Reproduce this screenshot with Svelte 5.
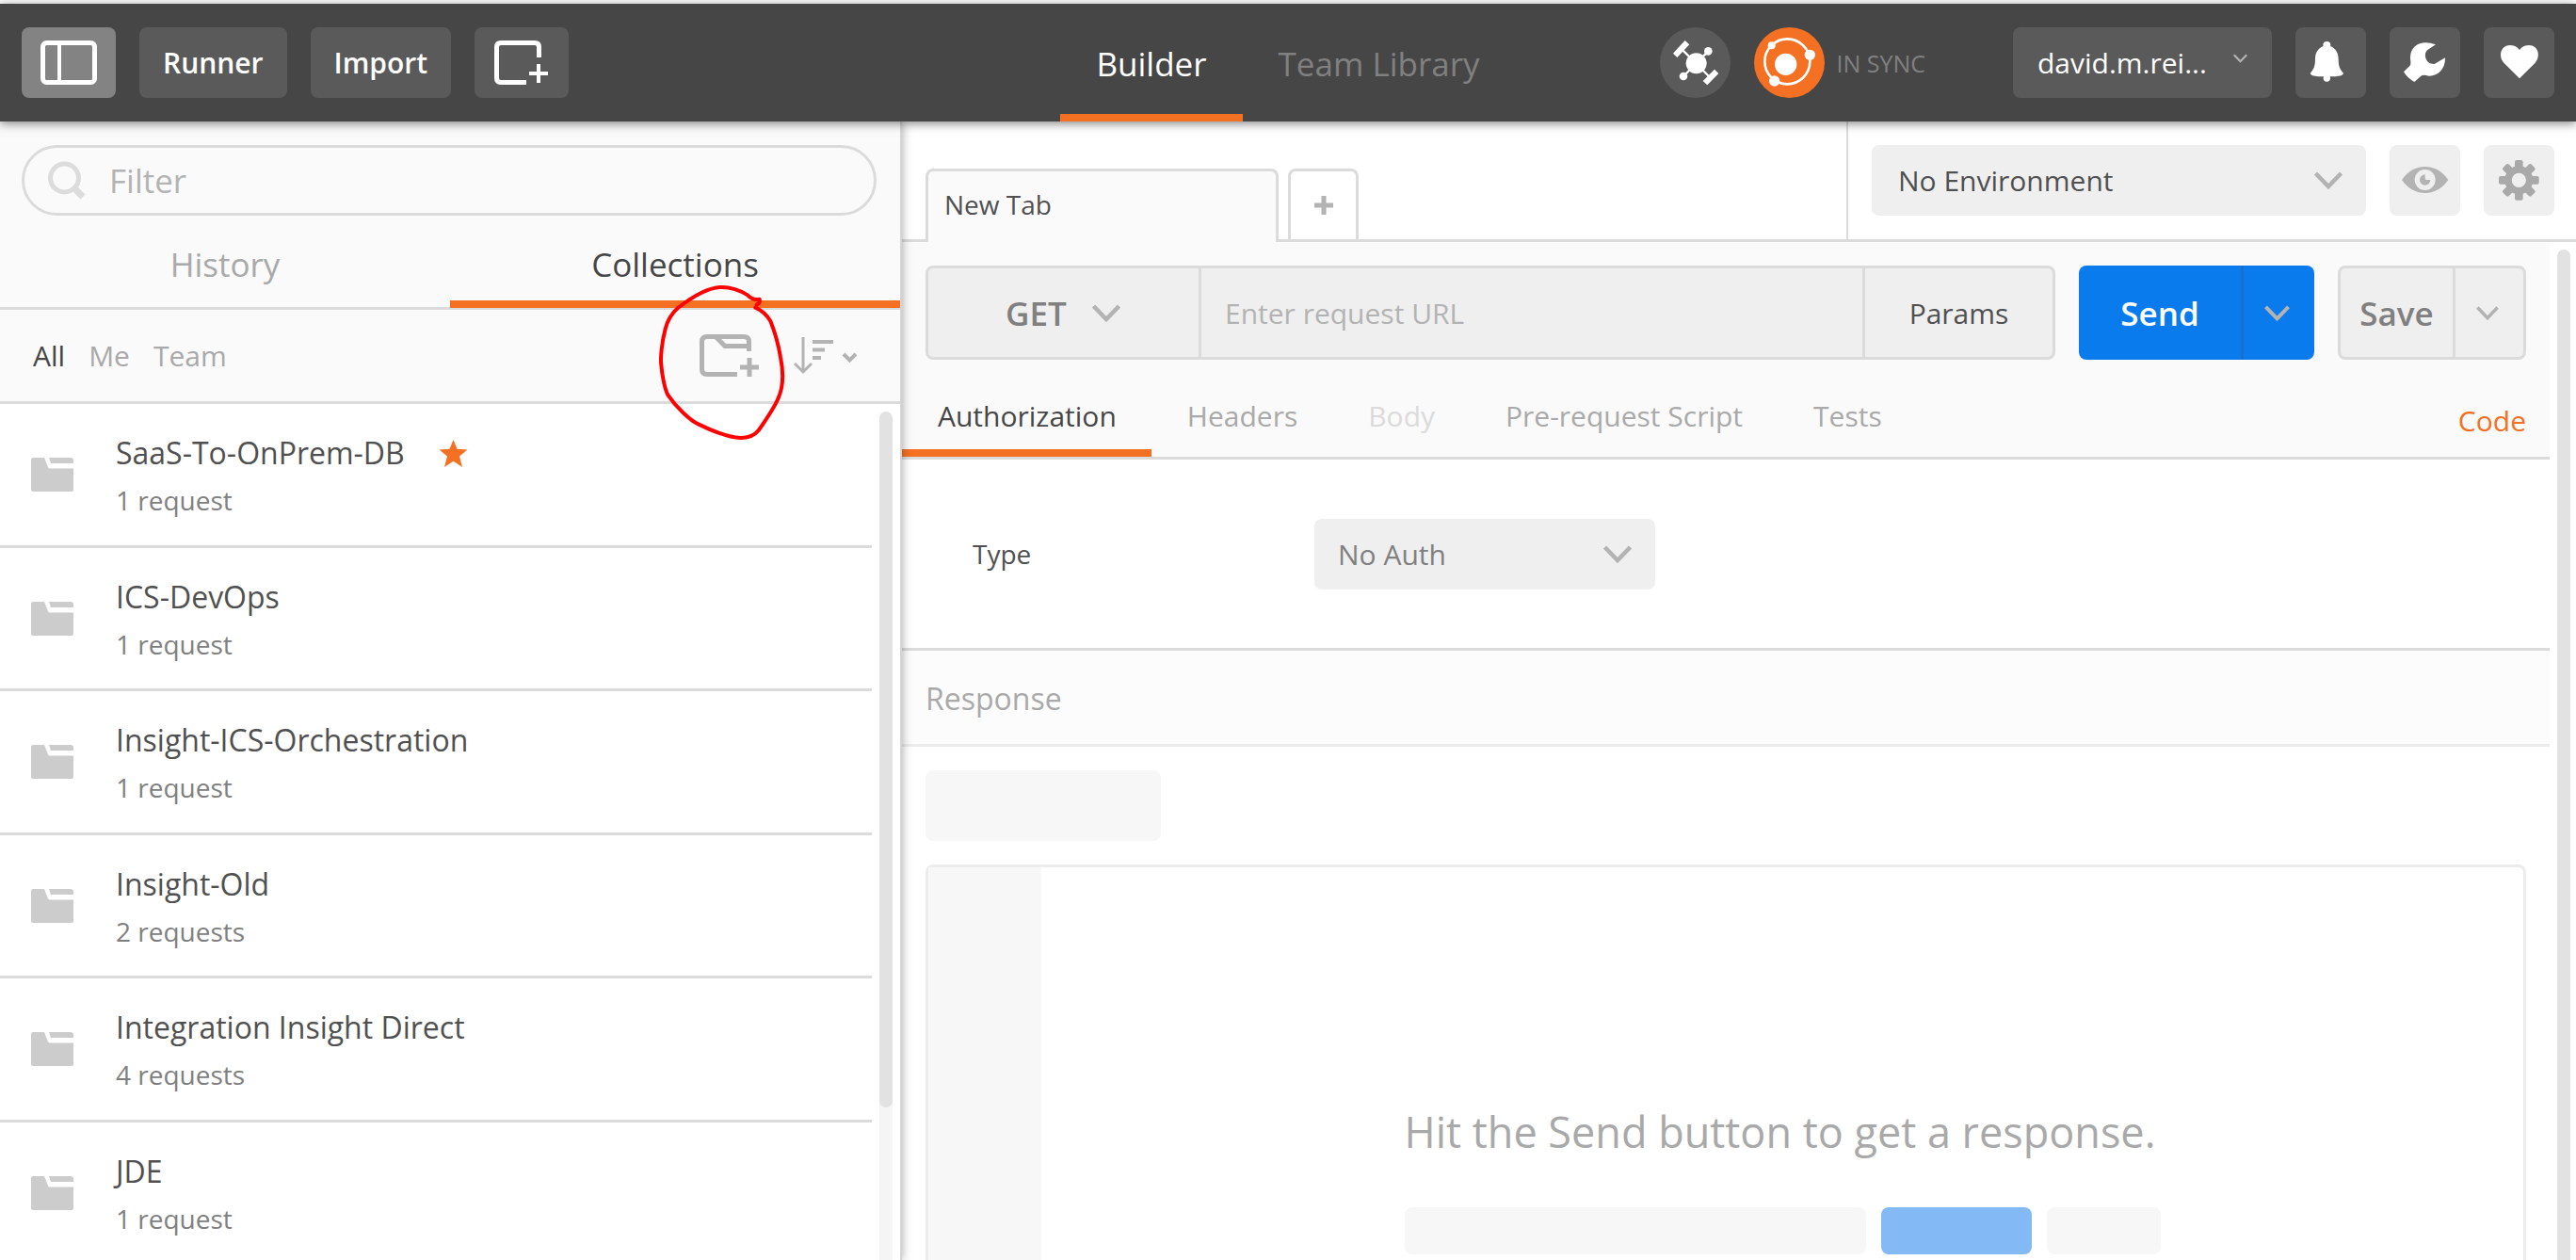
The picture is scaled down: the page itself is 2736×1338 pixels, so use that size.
<script>
  const collections = [
    { name: 'SaaS-To-OnPrem-DB', count: '1 request', starred: true },
    { name: 'ICS-DevOps', count: '1 request' },
    { name: 'Insight-ICS-Orchestration', count: '1 request' },
    { name: 'Insight-Old', count: '2 requests' },
    { name: 'Integration Insight Direct', count: '4 requests' },
    { name: 'JDE', count: '1 request' }
  ];
  const scopes = ['All', 'Me', 'Team'];
  const requestTabs = ['Authorization', 'Headers', 'Body', 'Pre-request Script', 'Tests'];
  const gearTeeth = [0, 45, 90, 135, 180, 225, 270, 315];

  let scope = $state('All');
  let requestTab = $state('Authorization');
  let url = $state('');
  let filter = $state('');
</script>

{#snippet chevron(size)}
  <svg class="chevron {size}" viewBox="0 0 30 19" aria-hidden="true">
    <path d="M1.5 2 L15 16 L28.5 2" fill="none" stroke="currentColor" stroke-width="4.5" />
  </svg>
{/snippet}

<div class="app">
  <header class="header">
    <div class="header-left">
      <button class="dark-btn wide active" aria-label="Toggle sidebar">
        <svg width="60" height="47" viewBox="0 0 60 47" fill="none" stroke="#fff">
          <rect x="2.5" y="2.5" width="55" height="42" rx="4" stroke-width="5" />
          <path d="M20 3V44" stroke-width="4" />
        </svg>
      </button>
      <button class="dark-btn text">Runner</button>
      <button class="dark-btn text">Import</button>
      <button class="dark-btn wide" aria-label="New window">
        <svg width="58" height="47" viewBox="0 0 58 47" fill="none" stroke="#fff">
          <path d="M34 44.5H7Q2.500 44.500 2.500 40V7Q2.500 2.500 7 2.500H43Q47.500 2.500 47.500 7V18" stroke-width="5" />
          <path d="M37 35H57M47 25V45" stroke-width="4" />
        </svg>
      </button>
    </div>

    <nav class="header-nav">
      <a class="current" href="#builder">Builder</a>
      <a href="#library">Team Library</a>
    </nav>

    <div class="header-right">
      <button class="round" aria-label="Interceptor">
        <svg viewBox="0 0 225 225" fill="#fff" stroke="#fff">
          <path d="M70 70L162 162M154 76L75 156" stroke-width="7" />
          <circle cx="116" cy="115" r="33" stroke="none" />
          <circle cx="154" cy="76" r="13" stroke="none" />
          <circle cx="75" cy="156" r="13" stroke="none" />
          <path d="M42 83L80 42L94 55L55 96ZM137 171L174 134L187 147L151 184Z" stroke="none" />
        </svg>
      </button>
      <button class="round orange" aria-label="Sync status">
        <svg viewBox="0 0 225 225" fill="#fff">
          <circle cx="106" cy="109" r="72" fill="none" stroke="#fff" stroke-width="8" />
          <circle cx="101" cy="118" r="35" />
          <circle cx="56" cy="58" r="12" />
          <circle cx="178" cy="88" r="17" />
          <circle cx="65" cy="171" r="17" />
        </svg>
      </button>
      <span class="sync">IN SYNC</span>
      <button class="dark-btn user" aria-haspopup="menu">david.m.rei... {@render chevron('tiny')}</button>
      <button class="dark-btn square" aria-label="Notifications">
        <svg viewBox="0 0 225 225" fill="#fff">
          <circle cx="100" cy="57" r="12" />
          <circle cx="100" cy="162" r="11" />
          <path d="M100 58C125 60 137 80 137 100C137 125 142 135 153 146C153 156 125 157 100 157C75 157 47 156 47 146C58 135 63 125 63 100C63 80 75 60 100 58Z" />
        </svg>
      </button>
      <button class="dark-btn square" aria-label="Settings">
        <svg viewBox="0 0 225 225" fill="#fff">
          <path d="M147 55L121 72C107 83 113 118 143 117L177 97C178 135 153 156 125 155C115 152 106 151 102 154L79 174Q58 163 45 142L64 123C70 118 66 105 66 95C67 55 105 38 147 55Z" />
        </svg>
      </button>
      <button class="dark-btn square" aria-label="Favourites">
        <svg viewBox="0 0 225 225" fill="#fff">
          <path d="M114 163L64 113C46 93 53 57 84 57C100 57 110 66 114 72C118 66 128 57 144 57C175 57 182 93 164 113Z" />
        </svg>
      </button>
    </div>
  </header>

  <div class="body">
    <aside class="sidebar">
      <div class="side-head">
        <label class="filter">
          <svg width="41" height="41" viewBox="0 0 41 41" fill="none" stroke="#dcdcdc" aria-hidden="true">
            <circle cx="17.500" cy="18" r="15" stroke-width="5" />
            <path d="M27 28L37 38" stroke-width="7" />
          </svg>
          <input type="text" placeholder="Filter" aria-label="Filter" bind:value={filter} />
        </label>
        <div class="side-tabs" role="tablist">
          <button role="tab" aria-selected="false">History</button>
          <button role="tab" aria-selected="true" class="current">Collections</button>
        </div>
      </div>

      <div class="toolbar">
        <div class="scopes">
          {#each scopes as item}
            <button class:current={scope === item} onclick={() => (scope = item)}>{item}</button>
          {/each}
        </div>
        <div class="tools">
          <button class="new-folder" aria-label="New collection">
            <svg width="63" height="45" viewBox="0 0 63 45" fill="none" stroke="#b3b3b3">
              <path d="M40 42.500H8Q2.500 42.500 2.500 37V8Q2.500 2.500 8 2.500H47Q52.500 2.500 52.500 8V18M17 2.500L27 12.500H52" stroke-width="5" />
              <path d="M43 35H63M53 25V45" stroke-width="5" />
            </svg>
            <svg class="mark" viewBox="180 180 405 510" aria-hidden="true">
              <path
                d="M491 248Q503 243 500 230Q478 234 462 217C430 197 405 191 375 192C330 194 270 235 240 258C215 280 205 305 200 325C188 370 184 420 187 440C190 480 200 520 208 535C235 575 280 617 305 628C350 650 400 671 440 672C465 672 485 663 497 648C520 615 550 570 560 545C578 505 575 455 567 415C558 360 545 325 535 300Q517 270 487 257"
                fill="none" stroke="#f00" stroke-width="12" stroke-linecap="round" stroke-linejoin="round"
              />
            </svg>
          </button>
          <button class="sort" aria-label="Sort">
            <svg width="67" height="40" viewBox="0 0 67 40" fill="none" stroke="#b3b3b3">
              <path d="M10 0V37M1 28L10 37L19 28" stroke-width="3" />
              <path d="M20 5H42M20 13.500H33M20 22H29" stroke-width="4" />
              <path d="M53 18L59.500 24.500L66 18" stroke-width="4" />
            </svg>
          </button>
        </div>
      </div>

      <div class="list-wrap">
        <ul class="list">
          {#each collections as item}
            <li>
              <svg class="folder" width="45" height="36" viewBox="0 0 45 36" fill="#ccc" aria-hidden="true">
                <path d="M2 0H14L18 10Q18.500 11.500 20 11.500H45V34Q45 36 43 36H2Q0 36 0 34V2Q0 0 2 0Z" />
                <path d="M19 0H42Q45 0 45 3V6H21Z" />
              </svg>
              <div class="entry">
                <div class="name">
                  {item.name}
                  {#if item.starred}
                    <svg width="31" height="29" viewBox="0 0 31 29" fill="#f47023" aria-label="Starred" role="img">
                      <path d="M15.500 0L19.500 9.800L30.500 10.600L22 17.500L25 29L15.500 22.800L6 29L9 17.500L0.500 10.600L11.500 9.800Z" />
                    </svg>
                  {/if}
                </div>
                <div class="count">{item.count}</div>
              </div>
            </li>
          {/each}
        </ul>
        <div class="track side-track"><div class="thumb"></div></div>
      </div>
    </aside>

    <main class="main">
      <div class="topbar">
        <div class="open-tabs">
          <button class="open-tab">New Tab</button>
          <button class="add-tab" aria-label="Add tab">
            <svg width="20" height="20" viewBox="0 0 20 20" stroke="#b3b3b3" stroke-width="5"><path d="M0 10H20M10 0V20" /></svg>
          </button>
        </div>
        <div class="environment">
          <div class="select env-select">
            <select aria-label="Environment"><option>No Environment</option></select>
            {@render chevron('')}
          </div>
          <button class="light-btn" aria-label="Environment quick look">
            <svg viewBox="0 0 225 225" fill="#b3b3b3">
              <path d="M39 111C60 80 88 69 113 69C138 69 166 80 187 111C166 142 138 153 113 153C88 153 60 142 39 111Z" />
              <circle cx="113" cy="111" r="33" fill="#efefef" />
              <path d="M113 94A17 17 0 1 0 130 111H118Q113 111 113 106Z" />
            </svg>
          </button>
          <button class="light-btn" aria-label="Manage environments">
            <svg viewBox="0 0 225 225" fill="#a9a9a9">
              {#each gearTeeth as angle}
                <rect x="99" y="48" width="26" height="40" rx="6" transform="rotate({angle} 112 112)" />
              {/each}
              <circle cx="112" cy="112" r="34" fill="none" stroke="#a9a9a9" stroke-width="22" />
            </svg>
          </button>
        </div>
      </div>

      <div class="scroll">
        <div class="content">
          <section class="request">
            <div class="request-row">
              <div class="url-group">
                <div class="select method">
                  <select aria-label="Method"><option>GET</option></select>
                  {@render chevron('')}
                </div>
                <input type="text" placeholder="Enter request URL" aria-label="Request URL" bind:value={url} />
                <button class="params">Params</button>
              </div>
              <div class="split send">
                <button class="split-main">Send</button>
                <button class="split-more" aria-label="Send options">{@render chevron('medium')}</button>
              </div>
              <div class="split save">
                <button class="split-main">Save</button>
                <button class="split-more" aria-label="Save options">{@render chevron('small')}</button>
              </div>
            </div>
            <div class="request-tabs">
              <div class="tab-set" role="tablist">
                {#each requestTabs as item}
                  <button
                    role="tab"
                    aria-selected={requestTab === item}
                    class:current={requestTab === item}
                    disabled={item === 'Body'}
                    onclick={() => (requestTab = item)}>{item}</button>
                {/each}
              </div>
              <a class="code" href="#code">Code</a>
            </div>
          </section>

          <section class="auth">
            <label for="auth-type">Type</label>
            <div class="select auth-select">
              <select id="auth-type"><option>No Auth</option></select>
              {@render chevron('')}
            </div>
          </section>

          <h2 class="response-title">Response</h2>
          <section class="response">
            <div class="ghost ghost-tabs"></div>
            <div class="viewer">
              <div class="gutter"></div>
              <div class="empty">
                <div>
                  <p>Hit the Send button to get a response.</p>
                  <div class="ghost-row">
                    <div class="ghost ghost-url"></div>
                    <div class="ghost ghost-send"></div>
                    <div class="ghost ghost-save"></div>
                  </div>
                </div>
              </div>
            </div>
          </section>
        </div>
        <div class="track main-track"><div class="thumb"></div></div>
      </div>
    </main>
  </div>
</div>

<style>
  :global(body) {
    margin: 0;
    background: #fff;
  }
  .app, .app * { box-sizing: border-box; }
  .app {
    display: flex;
    flex-direction: column;
    height: 100vh;
    overflow: hidden;
    padding-top: 4px;
    font-family: 'Open Sans', 'Noto Sans', sans-serif;
    font-size: 30px;
    color: #505050;
  }
  button, input, select {
    font: inherit;
    color: inherit;
    margin: 0;
    padding: 0;
    border: 0;
    background: none;
    outline: none;
  }
  button { cursor: pointer; white-space: nowrap; }
  a { text-decoration: none; color: inherit; }
  svg { display: block; flex: none; }
  input::placeholder { color: #b3b3b3; opacity: 1; }

  .chevron { width: 30px; height: 19px; color: #b3b3b3; pointer-events: none; }
  .chevron.medium { width: 27px; height: 17px; }
  .chevron.small { width: 24px; height: 15px; }
  .chevron.tiny { width: 15px; height: 10px; }

  /* Header */
  .header {
    flex: none;
    display: grid;
    grid-template-columns: 1fr auto 1fr;
    height: 125px;
    padding: 0 23px;
    background: #464646;
    box-shadow: 0 2px 10px rgba(0, 0, 0, 0.5);
    position: relative;
    z-index: 2;
  }
  .header-left, .header-right { display: flex; align-items: center; gap: 25px; }
  .header-right { justify-content: flex-end; }
  .dark-btn {
    display: flex;
    align-items: center;
    justify-content: center;
    height: 75px;
    border-radius: 8px;
    background: #5a5a5a;
    color: #fff;
  }
  .dark-btn.wide { width: 100px; }
  .dark-btn.active { background: #838383; }
  .dark-btn.text { padding: 0 25px; font-weight: 600; }
  .dark-btn.square { width: 75px; }
  .square svg, .round svg, .light-btn svg { width: 75px; height: 75px; }
  .dark-btn.user { width: 275px; justify-content: space-between; padding: 0 26px; margin-left: 68px; }
  .user .chevron { align-self: flex-start; margin-top: 28px; }
  .round { width: 75px; height: 75px; border-radius: 50%; background: #5a5a5a; }
  .round.orange { background: #f47023; }
  .sync { font-size: 25px; color: #808080; margin-left: -13px; }
  .header-nav { display: flex; font-size: 35px; color: #808080; }
  .header-nav a { padding: 10px 38px 0; line-height: 107px; border-bottom: 8px solid transparent; }
  .header-nav .current { color: #fff; border-color: #f47023; }

  .body { flex: 1; display: flex; min-height: 0; }

  /* Sidebar */
  .sidebar {
    flex: 0 0 958px;
    display: flex;
    flex-direction: column;
    border-right: 2px solid #d4d4d4;
    box-shadow: 0 0 10px rgba(0, 0, 0, 0.35);
    position: relative;
    z-index: 1;
    background: #fff;
  }
  .side-head { background: #fafafa; border-bottom: 3px solid #dbdbdb; padding-top: 25px; }
  .filter {
    display: flex;
    align-items: center;
    gap: 24px;
    height: 75px;
    margin: 0 25px 25px 23px;
    padding: 0 25px;
    border: 3px solid #dbdbdb;
    border-radius: 38px;
  }
  .filter input { flex: 1; min-width: 0; font-size: 35px; }
  .side-tabs { display: grid; grid-template-columns: 1fr 1fr; margin-bottom: -1px; }
  .side-tabs button {
    height: 73px;
    padding-bottom: 12px;
    line-height: 53px;
    font-size: 35px;
    color: #a9a9a9;
    border-bottom: 8px solid transparent;
  }
  .side-tabs .current { color: #464646; border-color: #f47023; }
  .toolbar {
    display: flex;
    align-items: center;
    justify-content: space-between;
    height: 100px;
    padding: 0 46px 0 35px;
    background: #fafafa;
    border-bottom: 3px solid #dbdbdb;
  }
  .scopes { display: flex; gap: 25px; color: #a9a9a9; }
  .scopes .current { color: #464646; }
  .tools { display: flex; align-items: center; gap: 37px; }
  .new-folder { position: relative; }
  .mark { position: absolute; left: -43px; top: -54px; width: 135px; height: 170px; pointer-events: none; }

  .list-wrap { flex: 1; min-height: 0; display: flex; gap: 8px; overflow: hidden; }
  .list { flex: 1; margin: 0; padding: 0; list-style: none; }
  .list li {
    display: flex;
    align-items: center;
    gap: 45px;
    height: 153px;
    padding-left: 33px;
    border-bottom: 3px solid #dbdbdb;
  }
  .list li:nth-child(even) { height: 152px; }
  .entry { padding-top: 4px; }
  .name { display: flex; align-items: center; gap: 36px; font-size: 32px; line-height: 50px; }
  .count { font-size: 28px; line-height: 50px; color: #808080; }

  .track { flex: none; width: 14px; margin-top: 8px; border-radius: 7px 7px 0 0; background: #f5f5f5; }
  .thumb { height: 100%; border-radius: 7px; background: #e2e2e2; }
  .side-track { margin-right: 8px; }
  .side-track .thumb { height: 82%; }
  .main-track { margin: 8px 6px 0 8px; }
  .main-track .thumb { border-radius: 7px 7px 0 0; }

  /* Tabs and environment */
  .main { flex: 1; min-width: 0; display: flex; flex-direction: column; }
  .topbar { flex: none; display: flex; height: 128px; border-bottom: 3px solid #dbdbdb; }
  .open-tabs { flex: 1; display: flex; align-items: flex-end; gap: 10px; padding-left: 25px; }
  .open-tab {
    width: 375px;
    height: 78px;
    margin-bottom: -3px;
    padding: 0 17px 5px;
    text-align: left;
    font-size: 28px;
    background: #fafafa;
    border: 3px solid #dbdbdb;
    border-bottom: 0;
    border-radius: 8px 8px 0 0;
  }
  .add-tab {
    display: flex;
    align-items: center;
    justify-content: center;
    width: 75px;
    height: 75px;
    border: 3px solid #dbdbdb;
    border-bottom: 0;
    border-radius: 8px 8px 0 0;
  }
  .environment {
    display: flex;
    align-items: center;
    gap: 25px;
    padding: 0 23px 0 25px;
    border-left: 2px solid #dbdbdb;
  }
  .select { display: grid; align-items: center; border-radius: 8px; background: #efefef; }
  .select select { grid-area: 1 / 1; appearance: none; width: 100%; height: 100%; padding: 0 25px; }
  .select .chevron { grid-area: 1 / 1; justify-self: end; margin-right: 25px; }
  .env-select { width: 525px; height: 75px; }
  .env-select select { padding-left: 28px; }
  .light-btn { width: 75px; height: 75px; border-radius: 8px; background: #efefef; }

  /* Request */
  .scroll { flex: 1; min-height: 0; display: flex; overflow: hidden; }
  .content { flex: 1; min-width: 0; display: flex; flex-direction: column; }
  .request { flex: none; background: #fafafa; border-bottom: 3px solid #dbdbdb; padding-top: 25px; }
  .request-row { display: flex; gap: 25px; padding: 0 25px; }
  .url-group, .split {
    display: flex;
    height: 100px;
    border: 3px solid #dbdbdb;
    border-radius: 8px;
    background: #efefef;
    overflow: hidden;
  }
  .url-group { flex: 1; min-width: 0; }
  .method { width: 287px; font-size: 35px; font-weight: 600; color: #808080; }
  .method select { padding-left: 82px; }
  .method .chevron { margin-right: 83px; }
  .url-group input { flex: 1; min-width: 0; padding: 0 25px; border-left: 3px solid #dbdbdb; }
  .params { width: 202px; border-left: 3px solid #dbdbdb; }
  .split-main { flex: 1; font-size: 35px; font-weight: 600; }
  .split-more { display: flex; align-items: center; justify-content: center; border-left: 3px solid #dbdbdb; }
  .send { width: 250px; border: 0; background: #097bed; color: #fff; }
  .send .split-more { width: 78px; padding-right: 4px; border-color: #1a6fc8; }
  .save { width: 200px; color: #808080; }
  .save .split-more { width: 75px; padding-right: 4px; }
  .request-tabs {
    display: flex;
    align-items: center;
    justify-content: space-between;
    margin-top: 25px;
    padding-right: 25px;
  }
  .tab-set { display: flex; color: #a9a9a9; }
  .tab-set button { padding: 0 37px 0 38px; line-height: 70px; border-bottom: 8px solid transparent; }
  .tab-set button:disabled { color: #dbdbdb; }
  .tab-set .current { color: #464646; border-color: #f47023; }
  .code { color: #f47023; }

  .auth {
    flex: none;
    display: flex;
    align-items: center;
    height: 203px;
    padding-left: 75px;
    border-bottom: 3px solid #dbdbdb;
  }
  .auth label { width: 363px; font-size: 28px; }
  .auth-select { width: 362px; height: 75px; color: #808080; }

  /* Response */
  .response-title {
    flex: none;
    margin: 0;
    padding: 2px 0 0 25px;
    font-size: 32px;
    font-weight: 400;
    line-height: 97px;
    color: #a9a9a9;
    background: #fcfcfc;
    border-bottom: 3px solid #ececec;
  }
  .response { flex: 1; min-height: 0; display: flex; flex-direction: column; gap: 25px; padding: 25px 25px 0; }
  .ghost { flex: none; border-radius: 8px; background: #f7f7f7; }
  .ghost-tabs { width: 250px; height: 75px; }
  .viewer {
    flex: 1;
    min-height: 0;
    display: flex;
    border: 3px solid #ececec;
    border-bottom: 0;
    border-radius: 8px 8px 0 0;
  }
  .gutter { width: 120px; background: #f7f7f7; }
  .empty { flex: 1; display: flex; justify-content: center; padding-top: 250px; }
  .empty p { margin: 0 0 50px; font-size: 45px; line-height: 61px; color: #a9a9a9; }
  .ghost-row { display: flex; gap: 16px; }
  .ghost-row .ghost { height: 50px; }
  .ghost-url { width: 490px; }
  .ghost-row .ghost-send { width: 160px; background: #83baf5; }
  .ghost-save { width: 121px; }
</style>
